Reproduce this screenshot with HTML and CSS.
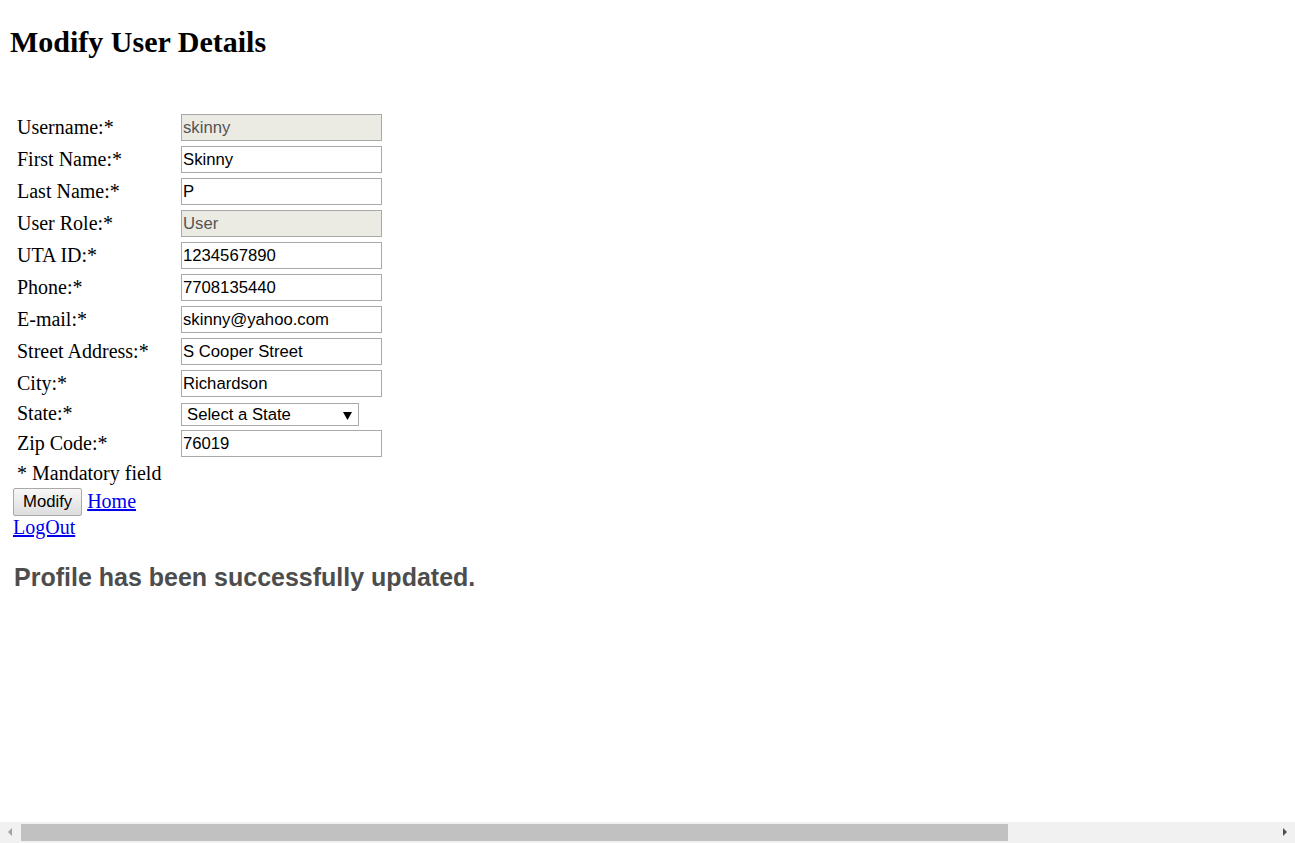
FILE: index.html
```html
<!DOCTYPE html>
<html lang="en">
<head>
<meta charset="utf-8">
<title>Modify User Details</title>
<link rel="stylesheet" href="styles.css">
</head>
<body>
<div class="page">
  <h2 class="title">Modify User Details</h2>
  <form class="user-form" action="#">
    <table class="fields">
      <tr><td class="label">Username:*</td><td class="cell"><input class="field field-readonly" value="skinny" readonly></td></tr>
      <tr><td class="label">First Name:*</td><td class="cell"><input class="field" value="Skinny"></td></tr>
      <tr><td class="label">Last Name:*</td><td class="cell"><input class="field" value="P"></td></tr>
      <tr><td class="label">User Role:*</td><td class="cell"><input class="field field-readonly" value="User" readonly></td></tr>
      <tr><td class="label">UTA ID:*</td><td class="cell"><input class="field" value="1234567890"></td></tr>
      <tr><td class="label">Phone:*</td><td class="cell"><input class="field" value="7708135440"></td></tr>
      <tr><td class="label">E-mail:*</td><td class="cell"><input class="field" value="skinny@yahoo.com"></td></tr>
      <tr><td class="label">Street Address:*</td><td class="cell"><input class="field" value="S Cooper Street"></td></tr>
      <tr><td class="label">City:*</td><td class="cell"><input class="field" value="Richardson"></td></tr>
      <tr class="state-row"><td class="label">State:*</td><td class="cell cell-select"><select class="state"><option>Select a State</option></select></td></tr>
      <tr><td class="label">Zip Code:*</td><td class="cell"><input class="field" value="76019"></td></tr>
      <tr class="note-row"><td class="label note" colspan="2">* Mandatory field</td></tr>
    </table>
    <div class="actions-row">
      <button class="btn" type="button">Modify</button>
      <a class="link" href="#">Home</a>
    </div>
    <div class="logout-row"><a class="link" href="#">LogOut</a></div>
  </form>
  <p class="status">Profile has been successfully updated.</p>
</div>
<div class="hscroll">
  <span class="arrow arrow-left"></span>
  <span class="thumb"></span>
  <span class="arrow arrow-right"></span>
</div>
</body>
</html>
```
FILE: styles.css
```css
html, body {
  margin: 0;
  padding: 0;
  background: #ffffff;
}

body {
  font-family: "Liberation Serif", "Times New Roman", serif;
  font-size: 20px;
  color: #000;
}

.page {
  padding: 0 10px;
}

.title {
  margin: 25px 0 0;
  font-size: 30px;
  line-height: 34px;
  font-weight: bold;
}

.user-form {
  margin: 0;
}

.fields {
  margin-top: 53px;
  border-collapse: separate;
  border-spacing: 0;
}

.label {
  width: 164px;
  padding: 0 0 2px 7px;
  vertical-align: middle;
  white-space: nowrap;
  line-height: 23px;
}

.cell {
  padding: 2px 0 3px;
  vertical-align: top;
}

.cell-select {
  padding: 3px 0 2px;
}

.field {
  display: block;
  box-sizing: border-box;
  width: 201px;
  height: 27px;
  margin: 0;
  padding: 0 1px;
  border: 1px solid #a9a9a9;
  font-family: "Liberation Sans", Arial, sans-serif;
  font-size: 16.7px;
  color: #000;
  background: #fff;
  outline: none;
}

.field-readonly {
  background: #ebebe4;
  color: #545454;
}

.state {
  display: block;
  box-sizing: border-box;
  width: 178px;
  height: 23px;
  margin: 0;
  padding: 0 0 0 5px;
  border: 1px solid #a9a9a9;
  border-radius: 0;
  font-family: "Liberation Sans", Arial, sans-serif;
  font-size: 16.7px;
  color: #000;
  background-color: #fff;
  background-image: url("data:image/svg+xml,%3Csvg xmlns='http://www.w3.org/2000/svg' width='9' height='8' viewBox='0 0 9 8'%3E%3Cpath d='M0 0H9L4.5 8Z' fill='%23000'/%3E%3C/svg%3E");
  background-repeat: no-repeat;
  background-position: 161px 8px;
  -webkit-appearance: none;
  appearance: none;
}

.note {
  height: 25px;
  padding: 0 0 0 7px;
  vertical-align: bottom;
}

.actions-row {
  display: flex;
  align-items: center;
  gap: 5px;
  height: 28px;
  margin-top: 3px;
  padding-left: 3px;
}

.btn {
  box-sizing: border-box;
  height: 28px;
  margin: 0;
  padding: 0 9px;
  border: 1px solid #a9a9a9;
  border-radius: 2px;
  background: linear-gradient(#f7f7f7, #dddddd);
  font-family: "Liberation Sans", Arial, sans-serif;
  font-size: 16.7px;
  color: #000;
}

.link {
  color: #0000ee;
  text-decoration: underline;
}

.actions-row .link {
  margin-top: -2px;
}

.logout-row {
  padding-left: 3px;
  line-height: 23px;
}

.status {
  margin: 24px 0 0;
  padding-left: 4px;
  font-family: "Liberation Sans", Arial, sans-serif;
  font-size: 25px;
  line-height: 29px;
  font-weight: bold;
  color: #4d4d4d;
}

.hscroll {
  position: fixed;
  left: 0;
  right: 0;
  bottom: 0;
  height: 21px;
  background: #f1f1f1;
}

.thumb {
  position: absolute;
  left: 21px;
  top: 2px;
  width: 987px;
  height: 17px;
  background: #c1c1c1;
}

.arrow {
  position: absolute;
  top: 6px;
  width: 0;
  height: 0;
  border-top: 4px solid transparent;
  border-bottom: 4px solid transparent;
}

.arrow-left {
  left: 8px;
  border-right: 4px solid #a3a3a3;
}

.arrow-right {
  right: 8px;
  border-left: 4px solid #505050;
}
```
